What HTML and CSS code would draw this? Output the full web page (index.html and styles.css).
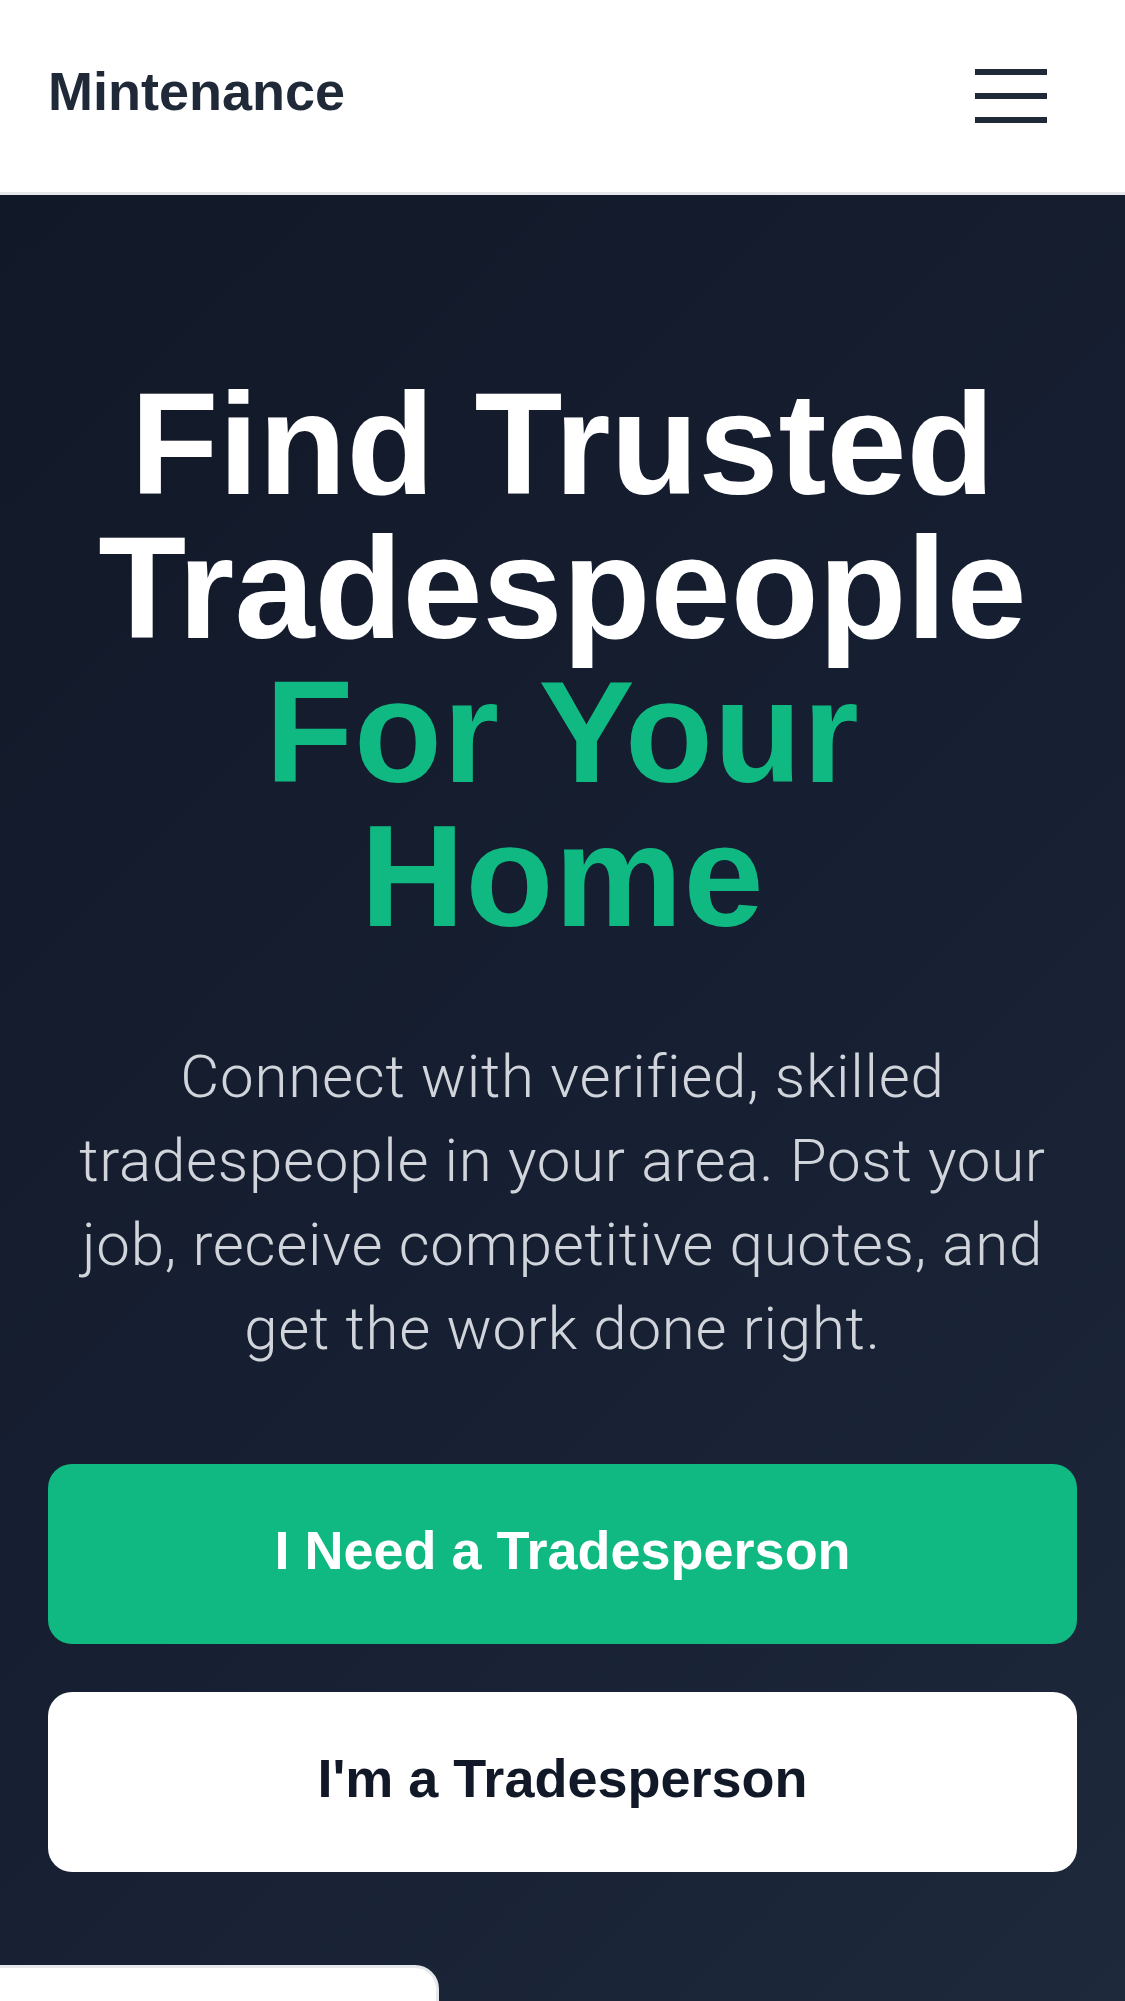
FILE: index.html
```html
<!DOCTYPE html>
<html lang="en">
<head>
<meta charset="utf-8">
<title>Mintenance</title>
<link rel="stylesheet" href="styles.css">
</head>
<body>
<header class="site-header">
  <div class="logo">Mintenance</div>
  <button class="menu-btn" aria-label="Menu">
    <svg width="72" height="54" viewBox="0 0 72 54" aria-hidden="true">
      <rect x="0" y="0" width="72" height="6" fill="#1f2937"/>
      <rect x="0" y="24" width="72" height="6" fill="#1f2937"/>
      <rect x="0" y="48" width="72" height="6" fill="#1f2937"/>
    </svg>
  </button>
</header>
<main class="hero">
  <h1 class="hero-title">Find Trusted Tradespeople <span class="accent">For Your Home</span></h1>
  <p class="hero-text">Connect with verified, skilled tradespeople in your area. Post your job, receive competitive quotes, and get the work done right.</p>
  <div class="hero-actions">
    <a class="btn btn-primary" href="#">I Need a Tradesperson</a>
    <a class="btn btn-secondary" href="#">I'm a Tradesperson</a>
  </div>
</main>
<div class="floating-card"></div>
</body>
</html>
```

FILE: styles.css
```css
* { box-sizing: border-box; }
html, body { margin: 0; padding: 0; }
body {
  font-family: "Liberation Sans", Arial, Helvetica, sans-serif;
  background: #111827;
  overflow: hidden;
}
.site-header {
  height: 195px;
  background: #ffffff;
  border-bottom: 3px solid #e5e7eb;
  display: flex;
  align-items: center;
  justify-content: space-between;
  padding: 0 48px;
}
.logo {
  font-size: 54px;
  font-weight: 700;
  line-height: 54px;
  color: #1f2937;
  padding-bottom: 10px;
}
.menu-btn {
  background: none;
  border: 0;
  padding: 24px 30px;
  margin: 0;
  display: flex;
  cursor: pointer;
}
.menu-btn svg { display: block; }
.hero {
  background: linear-gradient(135deg, #111827 0%, #172033 55%, #1e293b 100%);
  padding: 178px 48px 200px;
  min-height: 1806px;
  text-align: center;
}
.hero-title {
  margin: 0;
  font-size: 144px;
  line-height: 144px;
  font-weight: 700;
  color: #ffffff;
}
.hero-title .accent {
  display: block;
  color: #10b981;
  padding: 0 150px;
  letter-spacing: 1px;
}
.hero-text {
  margin: 86px auto 0;
  font-family: Roboto, "Liberation Sans", sans-serif;
  font-weight: 300;
  font-size: 60px;
  line-height: 84px;
  letter-spacing: 0.75px;
  color: #d1d5db;
  max-width: 1029px;
}
.hero-actions {
  margin-top: 93px;
  display: flex;
  flex-direction: column;
  gap: 48px;
}
.btn {
  display: flex;
  align-items: center;
  justify-content: center;
  height: 180px;
  border-radius: 24px;
  font-size: 54px;
  font-weight: 700;
  line-height: 81px;
  text-decoration: none;
  padding-bottom: 8px;
}
.btn-primary { background: #10b981; color: #ffffff; }
.btn-secondary { background: #ffffff; color: #111827; }
.floating-card {
  position: fixed;
  left: -3px;
  top: 1965px;
  width: 442px;
  height: 200px;
  background: #ffffff;
  border: 3px solid #e5e7eb;
  border-top-right-radius: 24px;
}
```
